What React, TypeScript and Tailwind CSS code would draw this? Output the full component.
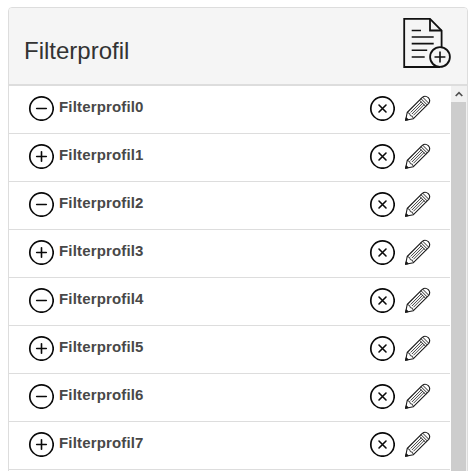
type IconProps = { className?: string };

function DocumentAddIcon({ className }: IconProps) {
  return (
    <svg viewBox="0 0 50 52" className={className} fill="none" stroke="#111" strokeWidth="1.8" role="img" aria-label="Filterprofil">
      <path d="M39.6 30V13.5L28 1.9H2.2V50H38" />
      <path d="M28 1.9V13.5H39.6" />
      <path d="M9.7 13.5H19M9.7 20H31.7M9.7 26.6H31.7M9.7 33.3H25.2M9.7 40H22.7" strokeWidth="1.6" />
      <circle cx="38" cy="40" r="9.9" fill="#f5f5f5" />
      <path d="M32.5 40H43.4M38 34.6V45.4" strokeWidth="1.6" />
    </svg>
  );
}

function CircleIcon({ kind }: { kind: "plus" | "minus" | "close" }) {
  return (
    <svg viewBox="0 0 26 26" className="size-[26px] shrink-0" fill="none" stroke="#0a0a0a" strokeWidth="1.7" strokeLinecap="round">
      <circle cx="13.5" cy="13.5" r="11.7" />
      {kind === "close" ? (
        <path d="M10 10L17 17M17 10L10 17" strokeWidth="1.6" />
      ) : (
        <path d="M8.7 13.5H18.3" strokeWidth="1.6" />
      )}
      {kind === "plus" && <path d="M13.5 8.7V18.3" strokeWidth="1.6" />}
    </svg>
  );
}

function PencilIcon() {
  return (
    <svg viewBox="0 0 26 26" className="size-[26px] shrink-0 overflow-visible" fill="none" stroke="#1a1a1a" strokeWidth="1.1" strokeLinejoin="round">
      <path d="M1.6 25.3L3.2 17.5L18.3 2.4Q21.2 0 24.3 2.7Q27 5.7 24.5 8.6L9.4 23.7Z" />
      <path d="M3.2 17.5L5.6 18.5L6.3 20.6L8.4 21.3L9.4 23.7" strokeWidth=".9" />
      <path d="M6.6 17.5L17.4 6.7M9.4 20.3L20.2 9.5M7.9 19L18.8 8.1" strokeWidth=".85" />
      <path d="M15.5 5.2L21.7 11.4M18.6 2.1L24.8 8.3M17 3.7L23.2 9.9" strokeWidth=".95" />
      <path d="M1.6 25.3L2.2 22.8L4.1 24.7Z" fill="#1a1a1a" />
    </svg>
  );
}

const profiles = Array.from({ length: 8 }, (_, i) => ({
  name: `Filterprofil${i}`,
  expanded: i % 2 === 0,
}));

export default function App() {
  return (
    <div className="h-[471px] w-[475px] overflow-hidden bg-white pl-2 pt-[7px] font-['Liberation_Sans',Arial,sans-serif]">
      <section className="flex h-[480px] w-[460px] flex-col rounded-[4px] border border-[#ddd]">
        <header className="flex h-[78px] shrink-0 items-start justify-between rounded-t-[3px] border-b-2 border-[#ddd] bg-[#f5f5f5] pl-[15px] pr-[15px]">
          <h1 className="mt-[28px] text-[24px] leading-[30px] text-[#333]">Filterprofil</h1>
          <DocumentAddIcon className="mt-[9px] h-[52px] w-[50px]" />
        </header>
        <div className="flex min-h-0 flex-1">
          <ul className="w-[441px]">
            {profiles.map((profile) => (
              <li key={profile.name} className="flex h-12 items-start border-b border-[#ddd] pl-[19px] pt-[9px]">
                <CircleIcon kind={profile.expanded ? "minus" : "plus"} />
                <span className="ml-[5px] mt-[3px] flex-1 text-[15px] font-bold leading-[18px] tracking-[0.16px] text-[#484848]">{profile.name}</span>
                <CircleIcon kind="close" />
                <span className="ml-[9px] mr-5 flex">
                  <PencilIcon />
                </span>
              </li>
            ))}
          </ul>
          <div className="ml-px flex w-4 flex-col bg-[#f1f1f1]">
            <div className="flex h-4 items-center justify-center">
              <svg viewBox="0 0 8 6" className="h-1.5 w-2" fill="none" stroke="#505050" strokeWidth="1.7">
                <path d="M.7 5L4 1.7L7.3 5" />
              </svg>
            </div>
            <div className="w-[15px] flex-1 bg-[#cdcdcd]" />
          </div>
        </div>
      </section>
    </div>
  );
}
